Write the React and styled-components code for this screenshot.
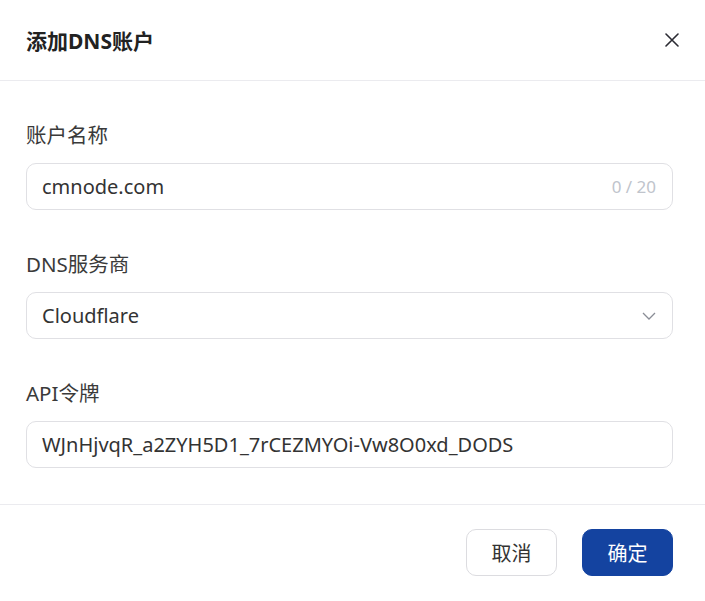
import React from 'react'
import styled, { createGlobalStyle } from 'styled-components'

const Global = createGlobalStyle`
  html, body {
    margin: 0;
    background: #fff;
  }
  body {
    font-family: 'Noto Sans', 'Noto Sans CJK SC', sans-serif;
    color: #333;
  }
`

const fields = [
  { id: 'name', label: '账户名称', value: 'cmnode.com', counter: '0 / 20' },
  { id: 'provider', label: 'DNS服务商', value: 'Cloudflare', select: true },
  { id: 'token', label: 'API令牌', value: 'WJnHjvqR_a2ZYH5D1_7rCEZMYOi-Vw8O0xd_DODS' },
]

const App = () => {
  return (
    <Dialog>
      <Global />
      <Header>
        <Title>添加DNS账户</Title>
        <CloseBtn aria-label='close'>
          <svg width='14' height='14' viewBox='0 0 14 14'>
            <path d='M1 1L13 13M13 1L1 13' stroke='#2b2b33' strokeWidth='1.6' strokeLinecap='round' />
          </svg>
        </CloseBtn>
      </Header>
      <Body>
        {fields.map((f) => (
          <Field key={f.id}>
            <Label>{f.label}</Label>
            <InputBox>
              <Value>{f.value}</Value>
              {f.counter && <Counter>{f.counter}</Counter>}
              {f.select && (
                <svg width='14' height='8' viewBox='0 0 14 8'>
                  <path d='M1 1L7 7L13 1' fill='none' stroke='#8a8d96' strokeWidth='1.3' />
                </svg>
              )}
            </InputBox>
          </Field>
        ))}
      </Body>
      <Footer>
        <Button>取消</Button>
        <Button primary>确定</Button>
      </Footer>
    </Dialog>
  )
}

const Dialog = styled.div`
  width: 705px;
  height: 601px;
  background: #fff;
  display: flex;
  flex-direction: column;
`

const Header = styled.div`
  height: 81px;
  padding: 0 22px 0 26px;
  display: flex;
  align-items: center;
  justify-content: space-between;
  border-bottom: 1px solid #ebebef;
  box-sizing: border-box;
  flex-shrink: 0;
`

const Title = styled.h2`
  margin: 0;
  font-size: 21px;
  font-weight: 700;
  color: #222;
`

const CloseBtn = styled.button`
  background: transparent;
  border: none;
  padding: 4px;
  display: grid;
  place-items: center;
  cursor: pointer;
`

const Body = styled.div`
  padding: 40px 32px 36px 26px;
  display: flex;
  flex-direction: column;
  gap: 40px;
  border-bottom: 1px solid #ebebef;
`

const Field = styled.div`
  display: flex;
  flex-direction: column;
  gap: 14px;
`

const Label = styled.div`
  font-size: 20.5px;
  line-height: 28px;
  color: #3a3a3a;
`

const InputBox = styled.div`
  height: 47px;
  box-sizing: border-box;
  border: 1px solid #e0e0e4;
  border-radius: 10px;
  padding: 0 16px 0 15px;
  display: flex;
  align-items: center;
  justify-content: space-between;
`

const Value = styled.span`
  font-size: 20px;
  color: #333;
`

const Counter = styled.span`
  font-size: 17px;
  color: #c0c4cc;
`

const Footer = styled.div`
  flex: 1;
  display: flex;
  justify-content: flex-end;
  align-items: flex-start;
  gap: 25px;
  padding: 24px 32px 0 0;
`

const Button = styled.button`
  width: 91px;
  height: 47px;
  border-radius: 10px;
  font-family: inherit;
  font-size: 20px;
  cursor: pointer;
  border: 1px solid ${(p) => (p.primary ? '#1443a0' : '#dcdce0')};
  background: ${(p) => (p.primary ? '#1443a0' : '#fff')};
  color: ${(p) => (p.primary ? '#fff' : '#333')};
`

export default App
